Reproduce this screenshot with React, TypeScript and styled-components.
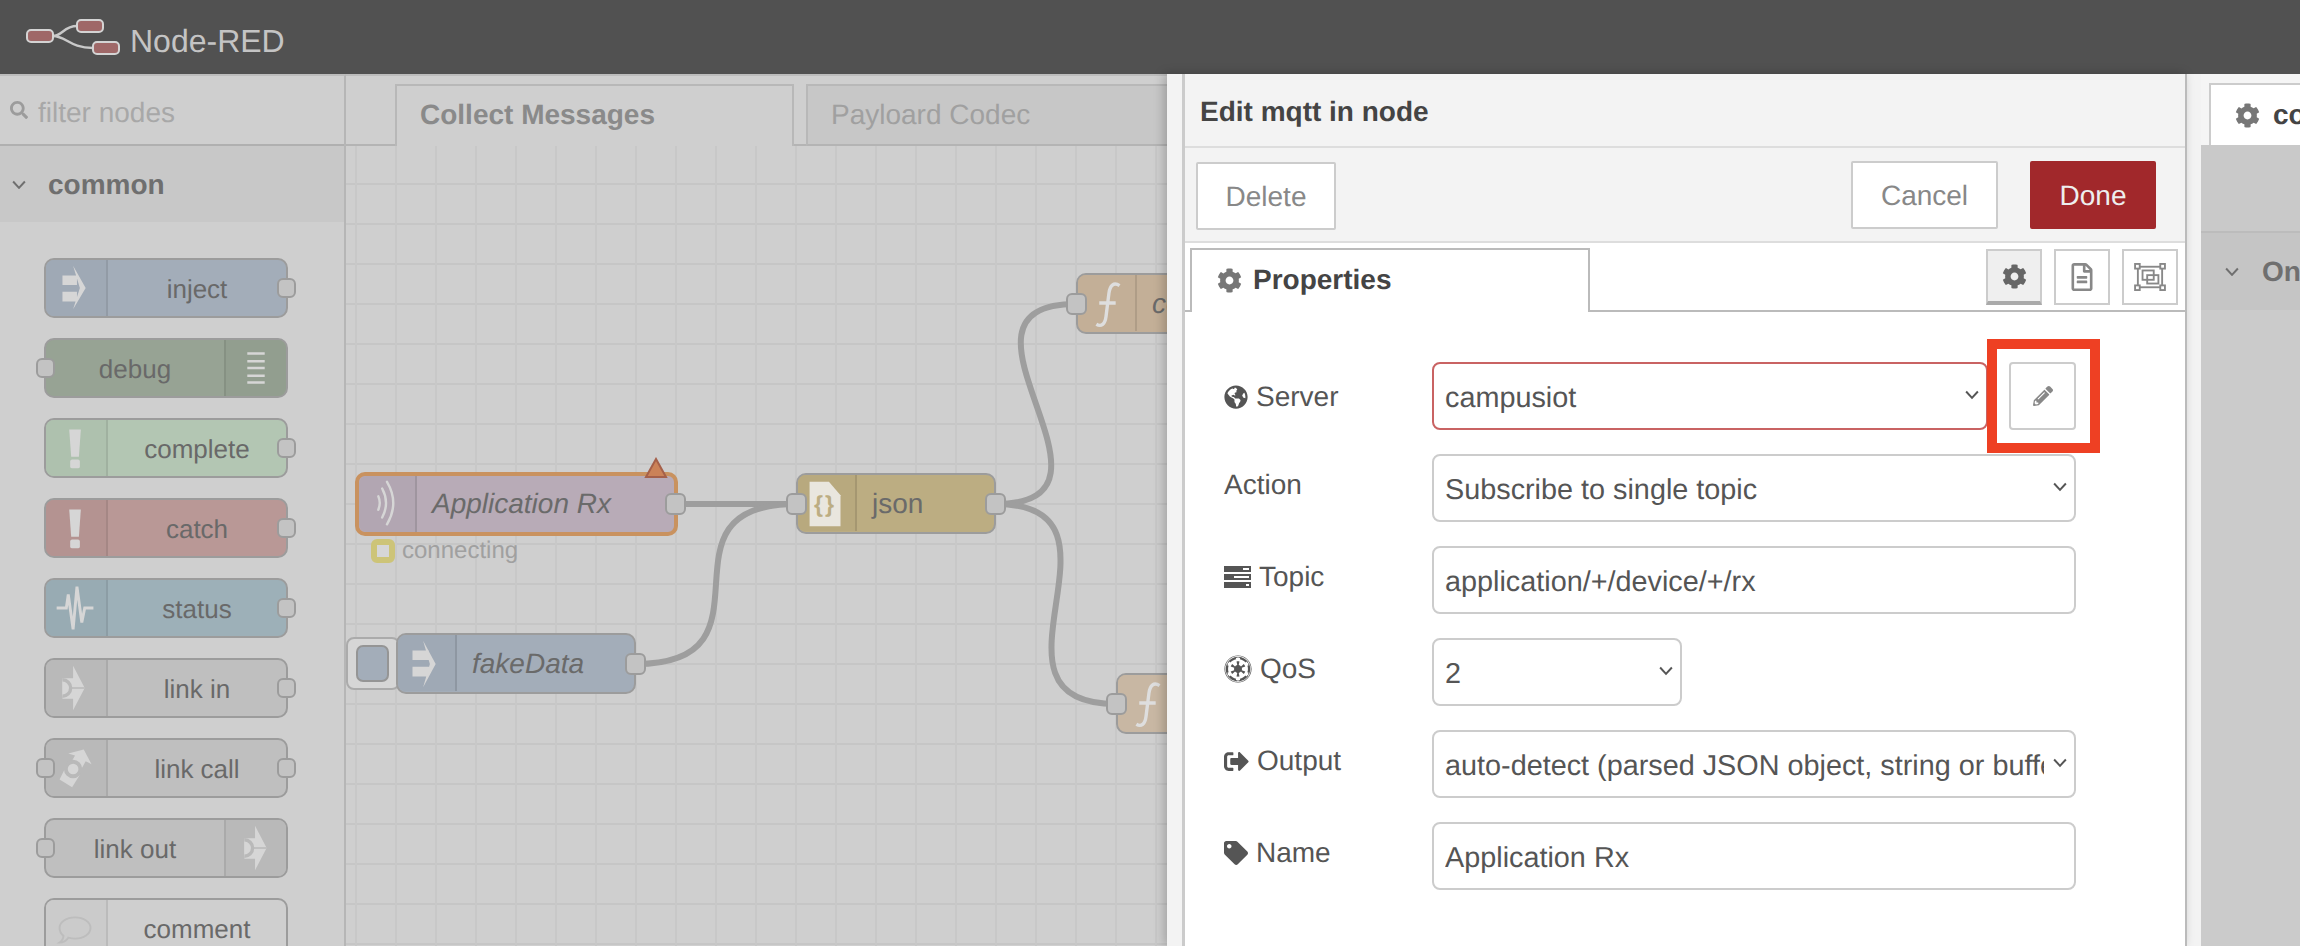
import React from 'react';
import styled, { createGlobalStyle } from 'styled-components';
import { FaCog, FaEmpire, FaGlobeAmericas, FaPencilAlt, FaRegFileAlt, FaSearch, FaSignOutAlt, FaTag } from 'react-icons/fa';

const SANS = '"Liberation Sans", Arial, Helvetica, sans-serif';
const ORIGIN_X = 346;
const ORIGIN_Y = 146;

const Global = createGlobalStyle`
  html, body { margin: 0; padding: 0; width: 2300px; height: 946px; overflow: hidden; background: #cfcfcf; }
  body { font-family: ${SANS}; text-rendering: geometricPrecision; }
  * { box-sizing: border-box; }
`;

const Page = styled.div`
  width: 2300px;
  height: 946px;
  display: flex;
  flex-direction: column;
  overflow: hidden;
`;

const Header = styled.header`
  height: 74px;
  flex: none;
  background: #515151;
  display: flex;
  align-items: center;
  padding-left: 25px;
  gap: 9px;
`;

const Brand = styled.span`
  color: #c4c4c4;
  font-size: 32px;
  line-height: 1;
  margin-top: 8px;
`;

const Main = styled.main`
  flex: 1;
  min-height: 0;
  display: flex;
`;

const Palette = styled.aside`
  width: 346px;
  flex: none;
  background: #cfcfcf;
  border-top: 2px solid #bcbcbc;
  border-right: 2px solid #b6b6b6;
  overflow: hidden;
`;

const Filter = styled.div`
  height: 70px;
  border-bottom: 2px solid #b0b0b0;
  display: flex;
  align-items: center;
  gap: 10px;
  padding: 6px 0 0 10px;
  color: #a8a8a8;
  font-size: 28px;
  svg { color: #9c9c9c; width: 18px; height: 18px; margin-top: -6px; }
`;

const Category = styled.div`
  height: 76px;
  background: #c8c8c8;
  display: flex;
  align-items: center;
  gap: 22px;
  padding: 1px 0 0 12px;
  color: #6f6f6f;
  font-size: 28px;
  font-weight: bold;
`;

const NodeList = styled.div`
  display: flex;
  flex-direction: column;
  gap: 20px;
  padding: 36px 0 0 44px;
`;

const PaletteNode = styled.div<{ $bg: string; $iconBg: string; $right?: boolean }>`
  position: relative;
  width: 244px;
  height: 60px;
  flex: none;
  background: ${p => p.$bg};
  border: 2px solid #9c9c9c;
  border-radius: 10px;
  display: flex;
  flex-direction: ${p => (p.$right ? 'row-reverse' : 'row')};
  color: #696969;
  font-size: 26px;
  > span { flex: 1; text-align: center; line-height: 58px; }
  > svg {
    flex: none;
    background: ${p => p.$iconBg};
    border-${p => (p.$right ? 'left' : 'right')}: 2px solid rgba(0,0,0,.08);
    border-radius: ${p => (p.$right ? '0 8px 8px 0' : '8px 0 0 8px')};
  }
`;

const Port = styled.i<{ $side: 'left' | 'right' }>`
  position: absolute;
  top: 50%;
  ${p => p.$side}: -10px;
  width: 19px;
  height: 20px;
  margin-top: -10px;
  background: #c3c3c3;
  border: 2px solid #9c9c9c;
  border-radius: 6px;
`;

const Workspace = styled.section`
  position: relative;
  flex: none;
  width: 1841px;
  display: flex;
  flex-direction: column;
  background: #cfcfcf;
`;

const FlowTabs = styled.div`
  height: 72px;
  flex: none;
  border-top: 2px solid #bcbcbc;
  border-bottom: 2px solid #b4b4b4;
  display: flex;
  align-items: flex-end;
  gap: 12px;
  padding-left: 49px;
`;

const FlowTab = styled.div<{ $active?: boolean }>`
  width: 399px;
  height: 62px;
  margin-bottom: -2px;
  padding-left: 23px;
  border: 2px solid #b8b8b8;
  border-bottom: ${p => (p.$active ? '0' : '2px solid #b4b4b4')};
  background: ${p => (p.$active ? '#cfcfcf' : '#c7c7c7')};
  color: ${p => (p.$active ? '#8a8a8a' : '#a0a0a0')};
  font-size: 28px;
  font-weight: ${p => (p.$active ? 'bold' : 'normal')};
  line-height: 58px;
`;

const Canvas = styled.div`
  position: relative;
  flex: 1;
  overflow: hidden;
  background-color: #cfcfcf;
  background-image:
    linear-gradient(to right, #c8c8c8 2px, transparent 2px),
    linear-gradient(to bottom, #c6c6c6 2px, transparent 2px);
  background-size: 40px 40px;
  background-position: 9px 37px;
`;

const Wires = styled.svg`
  position: absolute;
  left: 0;
  top: 0;
`;

const FlowNode = styled.div<{ $x: number; $y: number; $w: number; $h?: number; $bg: string; $iconBg: string; $selected?: boolean; $italic?: boolean }>`
  position: absolute;
  left: ${p => p.$x - ORIGIN_X}px;
  top: ${p => p.$y - ORIGIN_Y}px;
  width: ${p => p.$w}px;
  height: ${p => p.$h ?? 61}px;
  background: ${p => p.$bg};
  border: ${p => (p.$selected ? '4px solid #c9925f' : '2px solid #9c9c9c')};
  border-radius: 10px;
  display: flex;
  color: #6a6a6a;
  font-size: 28px;
  font-style: ${p => (p.$italic ? 'italic' : 'normal')};
  > svg:first-child {
    flex: none;
    background: ${p => p.$iconBg};
    border-right: 2px solid rgba(0,0,0,.1);
    border-radius: 8px 0 0 8px;
  }
  > span { padding-left: 15px; align-self: center; white-space: nowrap; }
`;

const FlowPort = styled.i<{ $side: 'left' | 'right' }>`
  position: absolute;
  top: 50%;
  ${p => p.$side}: -12px;
  width: 21px;
  height: 22px;
  margin-top: -11px;
  background: #c3c3c3;
  border: 2px solid #9c9c9c;
  border-radius: 6px;
  z-index: 2;
`;

const WarnMark = styled.svg`
  position: absolute;
  right: 6px;
  top: -19px;
`;

const NodeStatus = styled.div`
  position: absolute;
  left: ${371 - ORIGIN_X}px;
  top: ${539 - ORIGIN_Y}px;
  display: flex;
  align-items: center;
  gap: 7px;
  color: #a0a0a0;
  font-size: 24px;
  line-height: 24px;
`;

const StatusDot = styled.i`
  width: 24px;
  height: 24px;
  background: #d6d6d6;
  border: 6px solid #cdc478;
  border-radius: 6px;
`;

const InjectButton = styled.div`
  position: absolute;
  left: 0;
  top: ${637 - ORIGIN_Y}px;
  width: 54px;
  height: 53px;
  padding: 6px 0 0 8px;
  background: #d6d6d6;
  border: 2px solid #ababab;
  border-radius: 8px;
`;

const InjectKnob = styled.div`
  width: 33px;
  height: 37px;
  background: #a3adb9;
  border: 2px solid #959595;
  border-radius: 7px;
`;

const Tray = styled.div`
  position: absolute;
  left: 821px;
  right: 0;
  top: 0;
  bottom: 0;
  display: flex;
  background: #f3f3f3;
  padding-left: 15px;
  box-shadow: -3px 0 10px rgba(0,0,0,.22);
  z-index: 5;
`;

const TrayBody = styled.div`
  flex: 1;
  min-width: 0;
  background: #fff;
  border-left: 3px solid #cbcbcb;
  border-right: 2px solid #bbb;
  display: flex;
  flex-direction: column;
`;

const TrayTitle = styled.div`
  height: 74px;
  flex: none;
  background: #f3f3f3;
  border-bottom: 2px solid #ddd;
  padding-left: 15px;
  color: #444;
  font-size: 28px;
  font-weight: bold;
  line-height: 75px;
`;

const TrayToolbar = styled.div`
  height: 95px;
  flex: none;
  background: #f3f3f3;
  border-bottom: 2px solid #ddd;
  display: flex;
  align-items: center;
  padding: 0 29px 0 11px;
`;

const Button = styled.div<{ $primary?: boolean; $w: number }>`
  width: ${p => p.$w}px;
  height: 68px;
  background: ${p => (p.$primary ? '#a1282b' : '#fff')};
  border: 2px solid ${p => (p.$primary ? '#a1282b' : '#ccc')};
  border-radius: 2px;
  color: ${p => (p.$primary ? '#eee' : '#888')};
  font-size: 28px;
  text-align: center;
  line-height: 66px;
  & + & { margin-left: 32px; }
`;

const DeleteButton = styled(Button)`
  margin-top: 2px;
`;

const Spacer = styled.div`
  flex: 1;
`;

const TrayTabs = styled.div`
  height: 69px;
  flex: none;
  border-bottom: 2px solid #bbb;
  display: flex;
  align-items: flex-end;
  padding: 0 7px 5px 5px;
  gap: 12px;
`;

const TrayTab = styled.div`
  width: 400px;
  height: 64px;
  margin-bottom: -7px;
  margin-right: auto;
  background: #fff;
  border: 2px solid #bbb;
  border-bottom: 0;
  display: flex;
  align-items: center;
  gap: 11px;
  padding: 0 0 2px 25px;
  color: #444;
  font-size: 28px;
  font-weight: bold;
  svg { color: #777; width: 25px; height: 25px; }
`;

const ModeButton = styled.div<{ $active?: boolean }>`
  width: 56px;
  height: 56px;
  background: ${p => (p.$active ? '#efefef' : '#fff')};
  border: 2px solid #ccc;
  border-bottom: ${p => (p.$active ? '4px solid #aaa' : '2px solid #ccc')};
  color: ${p => (p.$active ? '#666' : '#888')};
  display: flex;
  align-items: center;
  justify-content: center;
`;

const Form = styled.div`
  display: flex;
  flex-direction: column;
  gap: 24px;
  padding: 50px 0 0 39px;
  color: #555;
  font-size: 28px;
`;

const Row = styled.div`
  display: flex;
  align-items: center;
  height: 68px;
`;

const Label = styled.label<{ $offset?: number }>`
  width: 208px;
  flex: none;
  display: flex;
  align-items: center;
  gap: 8px;
  margin-top: ${p => p.$offset ?? -6}px;
  color: #555;
  line-height: 32px;
  svg { flex: none; }
`;

const SelectWrap = styled.div<{ $w: number }>`
  position: relative;
  width: ${p => p.$w}px;
  height: 68px;
  flex: none;
  > svg {
    position: absolute;
    right: 9px;
    top: 28px;
    pointer-events: none;
  }
`;

const Select = styled.select<{ $error?: boolean }>`
  appearance: none;
  width: 100%;
  height: 100%;
  padding: 4px 30px 0 11px;
  background: #fff;
  border: 2px solid ${p => (p.$error ? '#c96363' : '#ccc')};
  border-radius: 8px;
  color: #555;
  font: 28.8px ${SANS};
  text-rendering: geometricPrecision;
  outline: none;
`;

const Input = styled.input`
  width: 644px;
  height: 68px;
  flex: none;
  padding: 4px 11px 0;
  background: #fff;
  border: 2px solid #ccc;
  border-radius: 8px;
  color: #555;
  font: 28.8px ${SANS};
  text-rendering: geometricPrecision;
  outline: none;
`;

const EditButton = styled.div`
  width: 67px;
  height: 68px;
  margin-left: 21px;
  flex: none;
  background: #fff;
  border: 2px solid #ccc;
  border-radius: 4px;
  color: #888;
  display: flex;
  align-items: center;
  justify-content: center;
`;

const Highlight = styled.div`
  position: absolute;
  left: ${1987 - 1167}px;
  top: ${339 - 74}px;
  width: 113px;
  height: 114px;
  border: 10px solid #ee4023;
  pointer-events: none;
`;

const Gutter = styled.div`
  width: 14px;
  flex: none;
  background: #f3f3f3;
`;

const Sidebar = styled.aside`
  flex: 1;
  min-width: 0;
  overflow: hidden;
  background: #cbcbcb;
  display: flex;
  flex-direction: column;
`;

const SideTabs = styled.div`
  height: 71px;
  flex: none;
  background: #f5f5f5;
  padding: 9px 0 0 8px;
`;

const SideTab = styled.div`
  height: 62px;
  width: 200px;
  background: #fff;
  border: 2px solid #ccc;
  border-bottom: 0;
  border-right: 0;
  display: flex;
  align-items: center;
  gap: 13px;
  padding-left: 24px;
  color: #444;
  font-size: 28px;
  font-weight: bold;
  white-space: nowrap;
  svg { color: #777; width: 25px; height: 25px; flex: none; }
`;

const SideToolbar = styled.div`
  height: 88px;
  flex: none;
  background: #c9c9c9;
  border-bottom: 2px solid #bcbcbc;
`;

const SideSection = styled.div`
  height: 77px;
  flex: none;
  background: #c5c5c5;
  display: flex;
  align-items: center;
  gap: 23px;
  padding-left: 24px;
  width: 260px;
  color: #6f6f6f;
  font-size: 28px;
  font-weight: bold;
  white-space: nowrap;
`;

const Chevron = ({ size = 14, color = '#555', w = 2 }: { size?: number; color?: string; w?: number }) => (
  <svg width={size} height={size * 0.7} viewBox="0 0 14 10">
    <path d="M1 1.5 L7 8 L13 1.5" fill="none" stroke={color} strokeWidth={w} />
  </svg>
);

const Logo = () => (
  <svg width="96" height="38" viewBox="25 22 96 38">
    <g fill="none" stroke="#c9c9c9" strokeWidth="2.5">
      <path d="M53 40 C62 40 64 30 77 30" />
      <path d="M53 40 C66 40 70 52 93 52" />
    </g>
    <g fill="#9f6868" stroke="#d4d4d4" strokeWidth="2">
      <rect x="27" y="34" width="26" height="12" rx="4" />
      <rect x="77" y="24" width="26" height="12" rx="4" />
      <rect x="93" y="46" width="26" height="12" rx="4" />
    </g>
  </svg>
);

const ICON = '#d6d6d6';
const LINK_BG = '#b9b9b9';
const IconSvg = ({ children, w = 62 }: { children: React.ReactNode; w?: number }) => (
  <svg width={w} height="56" viewBox={`0 0 ${w} 56`}>{children}</svg>
);

const InjectIcon = () => (
  <IconSvg>
    <path fill={ICON} d="M17 15 H32 V25 H17 Z M17 32 H32 V42 H17 Z M28 5 L41 28 L28 50 L35 28 Z" />
  </IconSvg>
);
const DebugIcon = () => (
  <IconSvg>
    <path stroke={ICON} strokeWidth="2.6" d="M22 13 H40 M22 21 H40 M22 28 H40 M22 36 H40 M22 43 H40" />
  </IconSvg>
);
const AlertIcon = () => (
  <IconSvg>
    <path fill={ICON} d="M24 9 H36 L34 37 H26 Z" />
    <rect x="25" y="40" width="10" height="9" rx="2" fill={ICON} />
  </IconSvg>
);
const StatusIcon = () => (
  <IconSvg>
    <path fill="none" stroke={ICON} strokeWidth="3" d="M11 28 H21 L23 14 L28 50 L32 6 L37 43 L40 28 H49" />
  </IconSvg>
);
const LinkGlyph = ({ dx = 0 }: { dx?: number }) => (
  <g transform={`translate(${dx} 0)`}>
    <path fill={ICON} d="M17 18 H28 V5 L40 28 L28 51 V39 H17 Z" />
    <path d="M26 28 H40" stroke={LINK_BG} strokeWidth="1.500" />
    <path d="M17 19.500 A8.500 8.500 0 0 1 17 36.500" fill={ICON} stroke={LINK_BG} strokeWidth="3.500" />
  </g>
);
const LinkInIcon = () => <IconSvg><LinkGlyph /></IconSvg>;
const LinkOutIcon = () => <IconSvg><LinkGlyph dx={2} /></IconSvg>;
const LinkCallIcon = () => (
  <IconSvg>
    <path fill={ICON} d="M23 13 L39 9 L47 24 L41 21 L36 30 L26 22 L30 15 Z" />
    <path fill={ICON} d="M21 26 L14 40 L27 48 L35 35 Z" />
    <circle cx="28" cy="29" r="7.500" fill={ICON} stroke={LINK_BG} strokeWidth="4" />
  </IconSvg>
);
const CommentIcon = () => (
  <IconSvg>
    <path fill="none" stroke="#bdbdbd" strokeWidth="2" d="M30 17 C39 17 46 22 46 28 C46 34 39 39 30 39 C27 39 25 38.5 23 38 C21 41 18 43 14 43 C17 41 18 39 18 36 C15.500 34 14 31 14 28 C14 22 21 17 30 17 Z" />
  </IconSvg>
);
const WaveIcon = () => (
  <IconSvg w={58}>
    <path fill="none" stroke={ICON} strokeWidth="2.500" strokeLinecap="round" d="M20 20 Q23 27 20 34 M24 12 Q32 27 24 42 M29 5 Q42 27 29 49" />
  </IconSvg>
);
const JsonIcon = () => (
  <IconSvg w={59}>
    <path fill="#e9e6de" d="M12 6 H32 L44 20 V52 H12 Z" />
    <text x="28" y="37" textAnchor="middle" fontFamily={SANS} fontSize="24" fontWeight="bold" fill="#bcad82" letterSpacing="2">{'{}'}</text>
  </IconSvg>
);
const FunctionIcon = () => (
  <IconSvg w={59}>
    <path fill="none" stroke="#dedede" strokeWidth="3.500" d="M43 10 C37 6 33 10 32 18 L29 42 C28 50 24 53 19 50 M22 28 H39" />
  </IconSvg>
);
const InjectFlowIcon = () => (
  <IconSvg w={59}>
    <path fill={ICON} d="M15 15 H32 V25 H15 Z M15 32 H32 V42 H15 Z M26 5 L39 29 L26 53 L33 29 Z" />
  </IconSvg>
);

const TasksIcon = () => (
  <svg width="27" height="22" viewBox="0 0 27 22" fill="#555">
    <path fillRule="evenodd" d="M0 0 H27 V6 H0 Z M19 2 V4 H25 V2 Z M0 8 H27 V14 H0 Z M10 10 V12 H25 V10 Z M0 16 H27 V22 H0 Z M22 18 V20 H25 V18 Z" />
  </svg>
);

const FrameIcon = () => (
  <svg width="32" height="28" viewBox="0 0 34 30" fill="none" stroke="#888" strokeWidth="2">
    <rect x="4" y="4" width="26" height="22" />
    <rect x="9" y="8" width="12" height="10" />
    <rect x="14" y="13" width="12" height="9" />
    <g fill="#fff">
      <rect x="1" y="1" width="5" height="5" />
      <rect x="28" y="1" width="5" height="5" />
      <rect x="1" y="24" width="5" height="5" />
      <rect x="28" y="24" width="5" height="5" />
    </g>
  </svg>
);

const paletteNodes = [
  { name: 'inject', bg: '#a3adb9', iconBg: '#9fa9b5', icon: <InjectIcon />, out: true },
  { name: 'debug', bg: '#97a394', iconBg: '#929e8f', icon: <DebugIcon />, in: true, right: true },
  { name: 'complete', bg: '#b3c6b3', iconBg: '#aec1ae', icon: <AlertIcon />, out: true },
  { name: 'catch', bg: '#b99896', iconBg: '#b49391', icon: <AlertIcon />, out: true },
  { name: 'status', bg: '#9db0b8', iconBg: '#98abb3', icon: <StatusIcon />, out: true },
  { name: 'link in', bg: '#bfbfbf', iconBg: LINK_BG, icon: <LinkInIcon />, out: true },
  { name: 'link call', bg: '#bfbfbf', iconBg: LINK_BG, icon: <LinkCallIcon />, in: true, out: true },
  { name: 'link out', bg: '#bfbfbf', iconBg: LINK_BG, icon: <LinkOutIcon />, in: true, right: true },
  { name: 'comment', bg: '#cfcfcf', iconBg: '#cbcbcb', icon: <CommentIcon />, out: false },
];

export default function App() {
  return (
    <Page>
      <Global />
      <Header>
        <Logo />
        <Brand>Node-RED</Brand>
      </Header>
      <Main>
        <Palette>
          <Filter>
            <FaSearch />
            <span>filter nodes</span>
          </Filter>
          <Category>
            <Chevron color="#6f6f6f" />
            <span>common</span>
          </Category>
          <NodeList>
            {paletteNodes.map(n => (
              <PaletteNode key={n.name} $bg={n.bg} $iconBg={n.iconBg} $right={n.right}>
                {n.in && <Port $side="left" />}
                {n.icon}
                <span>{n.name}</span>
                {n.out && <Port $side="right" />}
              </PaletteNode>
            ))}
          </NodeList>
        </Palette>

        <Workspace>
          <FlowTabs>
            <FlowTab $active>Collect Messages</FlowTab>
            <FlowTab>Payloard Codec</FlowTab>
          </FlowTabs>
          <Canvas>
            <Wires width="900" height="800" viewBox={`${ORIGIN_X} ${ORIGIN_Y} 900 800`}>
              <g fill="none" stroke="#9e9e9e" strokeWidth="6">
                <path d="M676 504 H796" />
                <path d="M636 664 C786 664 646 504 796 504" />
                <path d="M996 504 C1146 504 926 304 1076 304" />
                <path d="M996 504 C1146 504 966 704 1116 704" />
              </g>
            </Wires>
            <InjectButton><InjectKnob /></InjectButton>
            <FlowNode $x={355} $y={472} $w={323} $h={64} $bg="#b8abb7" $iconBg="#b2a6b2" $selected $italic>
              <WaveIcon />
              <span>Application Rx</span>
              <FlowPort $side="right" />
              <WarnMark width="24" height="22" viewBox="0 0 24 22">
                <path d="M12 2 L22 20 H2 Z" fill="#cb8258" stroke="#a5604a" strokeWidth="2" />
              </WarnMark>
            </FlowNode>
            <NodeStatus><StatusDot />connecting</NodeStatus>
            <FlowNode $x={396} $y={633} $w={240} $bg="#a3adb9" $iconBg="#9fa9b5" $italic>
              <InjectFlowIcon />
              <span>fakeData</span>
              <FlowPort $side="right" />
            </FlowNode>
            <FlowNode $x={796} $y={473} $w={200} $bg="#bcad82" $iconBg="#b8a97e">
              <JsonIcon />
              <span>json</span>
              <FlowPort $side="left" />
              <FlowPort $side="right" />
            </FlowNode>
            <FlowNode $x={1076} $y={273} $w={200} $bg="#c3af97" $iconBg="#c3af97" $italic>
              <FunctionIcon />
              <span>convert</span>
              <FlowPort $side="left" />
            </FlowNode>
            <FlowNode $x={1116} $y={673} $w={200} $bg="#c8b7a3" $iconBg="#c8b7a3" $italic>
              <FunctionIcon />
              <span>decode</span>
              <FlowPort $side="left" />
            </FlowNode>
          </Canvas>

          <Tray>
            <TrayBody>
              <TrayTitle>Edit mqtt in node</TrayTitle>
              <TrayToolbar>
                <DeleteButton $w={140}>Delete</DeleteButton>
                <Spacer />
                <Button $w={147}>Cancel</Button>
                <Button $w={126} $primary>Done</Button>
              </TrayToolbar>
              <TrayTabs>
                <TrayTab><FaCog /><span>Properties</span></TrayTab>
                <ModeButton $active><FaCog size={25} /></ModeButton>
                <ModeButton><FaRegFileAlt size={28} /></ModeButton>
                <ModeButton><FrameIcon /></ModeButton>
              </TrayTabs>
              <Form>
                <Row>
                  <Label $offset={2}><FaGlobeAmericas size={24} />Server</Label>
                  <SelectWrap $w={556}>
                    <Select $error defaultValue="campusiot"><option>campusiot</option></Select>
                    <Chevron />
                  </SelectWrap>
                  <EditButton><FaPencilAlt size={20} /></EditButton>
                </Row>
                <Row>
                  <Label>Action</Label>
                  <SelectWrap $w={644}>
                    <Select defaultValue="s"><option value="s">Subscribe to single topic</option></Select>
                    <Chevron />
                  </SelectWrap>
                </Row>
                <Row>
                  <Label><TasksIcon />Topic</Label>
                  <Input readOnly defaultValue="application/+/device/+/rx" />
                </Row>
                <Row>
                  <Label><FaEmpire size={28} />QoS</Label>
                  <SelectWrap $w={250}>
                    <Select defaultValue="2"><option>2</option></Select>
                    <Chevron />
                  </SelectWrap>
                </Row>
                <Row>
                  <Label><FaSignOutAlt size={25} />Output</Label>
                  <SelectWrap $w={644}>
                    <Select defaultValue="a"><option value="a">auto-detect (parsed JSON object, string or buffer)</option></Select>
                    <Chevron />
                  </SelectWrap>
                </Row>
                <Row>
                  <Label><FaTag size={24} />Name</Label>
                  <Input readOnly defaultValue="Application Rx" />
                </Row>
              </Form>
            </TrayBody>
            <Highlight />
          </Tray>
        </Workspace>

        <Gutter />

        <Sidebar>
          <SideTabs>
            <SideTab><FaCog /><span>config nodes</span></SideTab>
          </SideTabs>
          <SideToolbar />
          <SideSection>
            <Chevron color="#6f6f6f" />
            <span>On all flows</span>
          </SideSection>
        </Sidebar>
      </Main>
    </Page>
  );
}
